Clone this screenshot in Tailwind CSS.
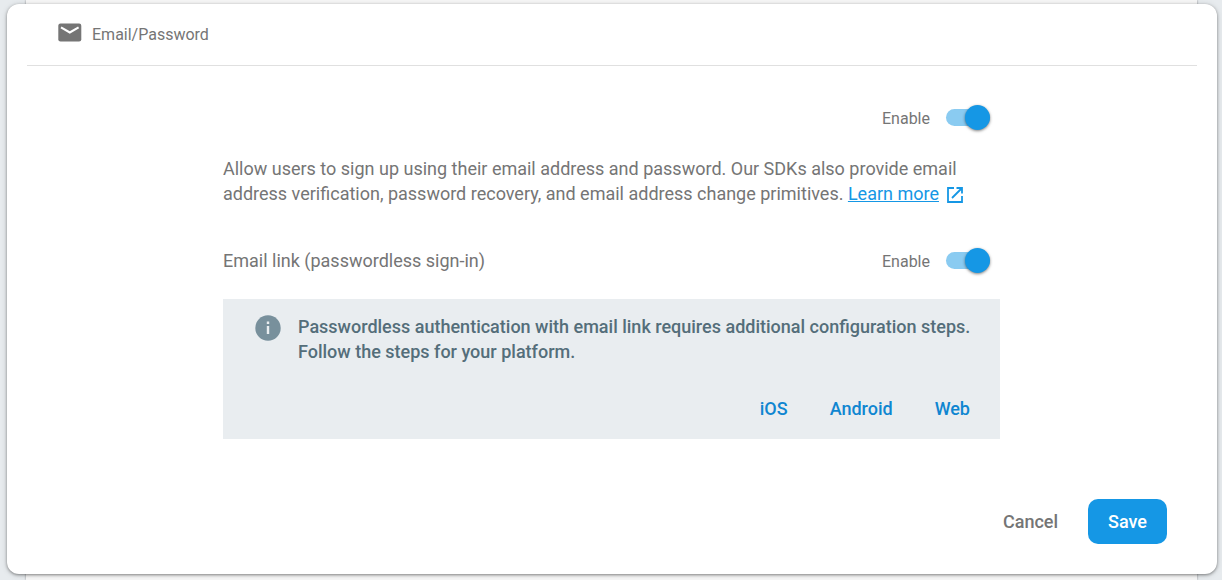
<!DOCTYPE html>
<html lang="en">
<head>
<meta charset="utf-8">
<meta name="viewport" content="width=device-width, initial-scale=1">
<title>Email/Password</title>
<script src="https://cdn.jsdelivr.net/npm/@tailwindcss/browser@4"></script>
</head>
<body class="bg-[#e7ebee] font-[Roboto,sans-serif] text-[#757575]">
<div class="relative flex min-h-screen pt-1 pr-[5px] pb-[6px] pl-[7px]">
  <div class="absolute inset-y-0 right-[25px] left-[26px] bg-[#f7f7f7] shadow-[0_0_2px_rgba(0,0,0,0.4)]"></div>
  <main class="relative flex grow flex-col rounded-xl bg-white shadow-[0_1px_3px_rgba(0,0,0,0.4),0_1px_6px_rgba(0,0,0,0.15)]">
    <header class="mx-5 flex h-[62px] items-center gap-[10px] border-b border-[#e0e0e0] px-[31px]">
      <svg class="-mt-1 h-[19px] w-6" viewBox="0 0 24 19" aria-hidden="true"><rect x="0.3" y="0.5" width="23" height="18" rx="2.2" fill="#757575"/><path d="M3 4.3l8.800 5.200 8.800-5.200" fill="none" stroke="#fff" stroke-width="2.1"/></svg>
      <h1 class="text-base">Email/Password</h1>
    </header>
    <div class="mx-auto w-full max-w-[778px] pt-[37px] pr-px">
      <div class="flex justify-end pr-[10px]">
        <label class="flex cursor-pointer items-center gap-4 text-base"><span class="pt-1 leading-6">Enable</span>
          <span class="relative flex h-[26px] w-11 items-center">
            <input type="checkbox" role="switch" checked class="peer absolute inset-0 m-0 cursor-pointer opacity-0">
            <span class="h-[17px] w-full rounded-full bg-[#8acbf1]"></span>
            <span class="pointer-events-none absolute right-0 size-[25px] rounded-full bg-[#1597e5] shadow-[0_1px_3px_rgba(0,0,0,0.5)]"></span>
          </span>
        </label>
      </div>
      <p class="mt-[25px] text-lg leading-[25px]">Allow users to sign up using their email address and password. Our SDKs also provide email address verification, password recovery, and email address change primitives. <a href="#" class="whitespace-nowrap text-[#1597e5] underline">Learn more<svg class="ml-2 inline-block size-4 align-[-3px]" viewBox="0 0 16 16" fill="none" stroke="currentColor" stroke-width="1.8" aria-hidden="true"><path d="M7 1H1v14h14V9M9.500 1H15v5.500M15 1L5 11"/></svg></a></p>
      <div class="mt-10 flex items-center justify-between pr-[10px]">
        <h2 class="text-lg leading-[25px]">Email link (passwordless sign-in)</h2>
        <label class="flex cursor-pointer items-center gap-4 text-base"><span class="pt-1 leading-6">Enable</span>
          <span class="relative flex h-[26px] w-11 items-center">
            <input type="checkbox" role="switch" checked class="peer absolute inset-0 m-0 cursor-pointer opacity-0">
            <span class="h-[17px] w-full rounded-full bg-[#8acbf1]"></span>
            <span class="pointer-events-none absolute right-0 size-[25px] rounded-full bg-[#1597e5] shadow-[0_1px_3px_rgba(0,0,0,0.5)]"></span>
          </span>
        </label>
      </div>
      <section class="mt-[25px] bg-[#e9edf0] pt-[15px] pb-[18px]">
        <div class="flex gap-[17px] pr-6 pl-8">
          <svg class="mt-px size-[26px] shrink-0" viewBox="0 0 26 26" aria-hidden="true"><circle cx="13" cy="13" r="12.700" fill="#78909c"/><path d="M11.800 6.500h2.400v2.500h-2.400zM11.800 11h2.400v8h-2.400z" fill="#e9edf0"/></svg>
          <p class="text-lg leading-[25px] font-medium text-[#546e7a]">Passwordless authentication with email link requires additional configuration steps. Follow the steps for your platform.</p>
        </div>
        <nav class="mt-8 flex justify-end gap-[42px] pr-[30px] text-lg leading-[25px] font-medium text-[#0f86d1]">
          <a href="#">iOS</a><a href="#">Android</a><a href="#">Web</a>
        </nav>
      </section>
    </div>
    <footer class="mt-auto flex justify-end gap-[10px] px-[50px] pb-[30px] text-lg font-medium">
      <button type="button" class="h-[45px] cursor-pointer px-5">Cancel</button>
      <button type="button" class="h-[45px] cursor-pointer rounded-[10px] bg-[#1597e5] px-5 text-white">Save</button>
    </footer>
  </main>
</div>
</body>
</html>
